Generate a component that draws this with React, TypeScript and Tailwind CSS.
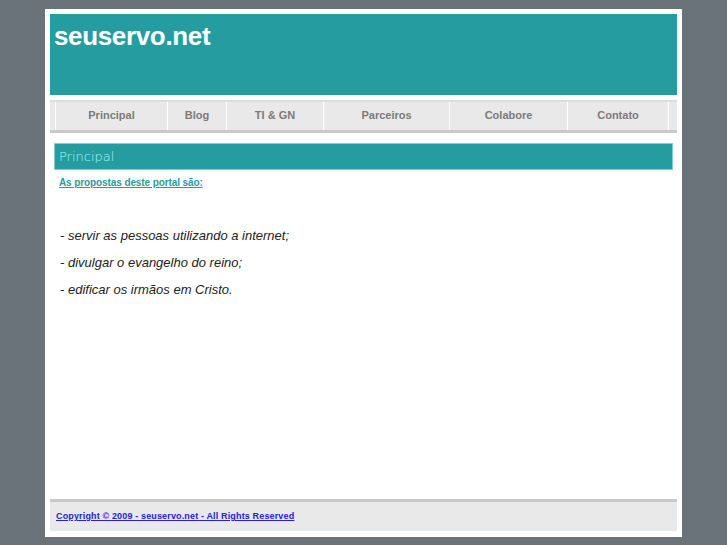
import React from "react";

const navItems = [
  { label: "Principal", w: "w-[112px]" },
  { label: "Blog", w: "w-[59px]" },
  { label: "TI & GN", w: "w-[97px]" },
  { label: "Parceiros", w: "w-[126px]" },
  { label: "Colabore", w: "w-[118px]" },
  { label: "Contato", w: "w-[101px]" },
];

export default function App() {
  return (
    <div
      className="min-h-[545px] w-full bg-[#6a7379] pt-[9px] pb-[8px]"
      style={{ fontFamily: '"Liberation Sans", Arial, sans-serif' }}
    >
      <div className="ml-[45px] w-[637px] h-[528px] bg-white p-[5px] flex flex-col">
        <div className="h-[81px] bg-[#259ca0] px-[4px] pt-[9px]">
          <div className="text-white font-bold text-[26px] leading-none tracking-[-0.35px]">seuservo.net</div>
        </div>
        <div className="mt-[5px] h-[33px] bg-[#e9e9e9] border-t-[2px] border-[#dcdcdc] border-b-[3px] border-b-[#c9c9c9] flex pl-[5px]">
          {navItems.map((n) => (
            <div
              key={n.label}
              className={`${n.w} border-l border-white flex items-center justify-center text-[11px] leading-[14px] pb-[3px] font-bold text-[#7b7b7b]`}
            >
              {n.label}
            </div>
          ))}
          <div className="flex-1 border-l border-white" />
        </div>
        <div className="mx-[4px] mt-[10px] h-[27px] bg-[#259ca0] border border-[#7fd0d2] flex items-center pl-[4px]">
          <span
            className="text-[#a8f4f6] text-[13px]"
            style={{ fontFamily: '"DejaVu Sans", sans-serif', fontWeight: 200 }}
          >
            Principal
          </span>
        </div>
        <div className="pl-[9px] mt-[7px] text-[10px] leading-[12px]">
          <a href="#" className="font-bold text-[#259ca0] underline tracking-[-0.1px]">
            As propostas deste portal são:
          </a>
        </div>
        <div className="pl-[10px] mt-[39px] flex flex-col gap-[11px] text-[13px] italic text-[#222]">
          <div className="leading-[16px]">- servir as pessoas utilizando a internet;</div>
          <div className="leading-[16px]">- divulgar o evangelho do reino;</div>
          <div className="leading-[16px]">- edificar os irmãos em Cristo.</div>
        </div>
        <div className="flex-1" />
        <div className="h-[32px] bg-[#e9e9e9] border-t-[3px] border-[#c9c9c9] flex items-center pl-[6px] mb-[1px] text-[9px] leading-[11px]">
          <a href="#" className="font-bold text-[#2222dd] underline tracking-[0.15px]">
            Copyright © 2009 - seuservo.net - All Rights Reserved
          </a>
        </div>
      </div>
    </div>
  );
}
